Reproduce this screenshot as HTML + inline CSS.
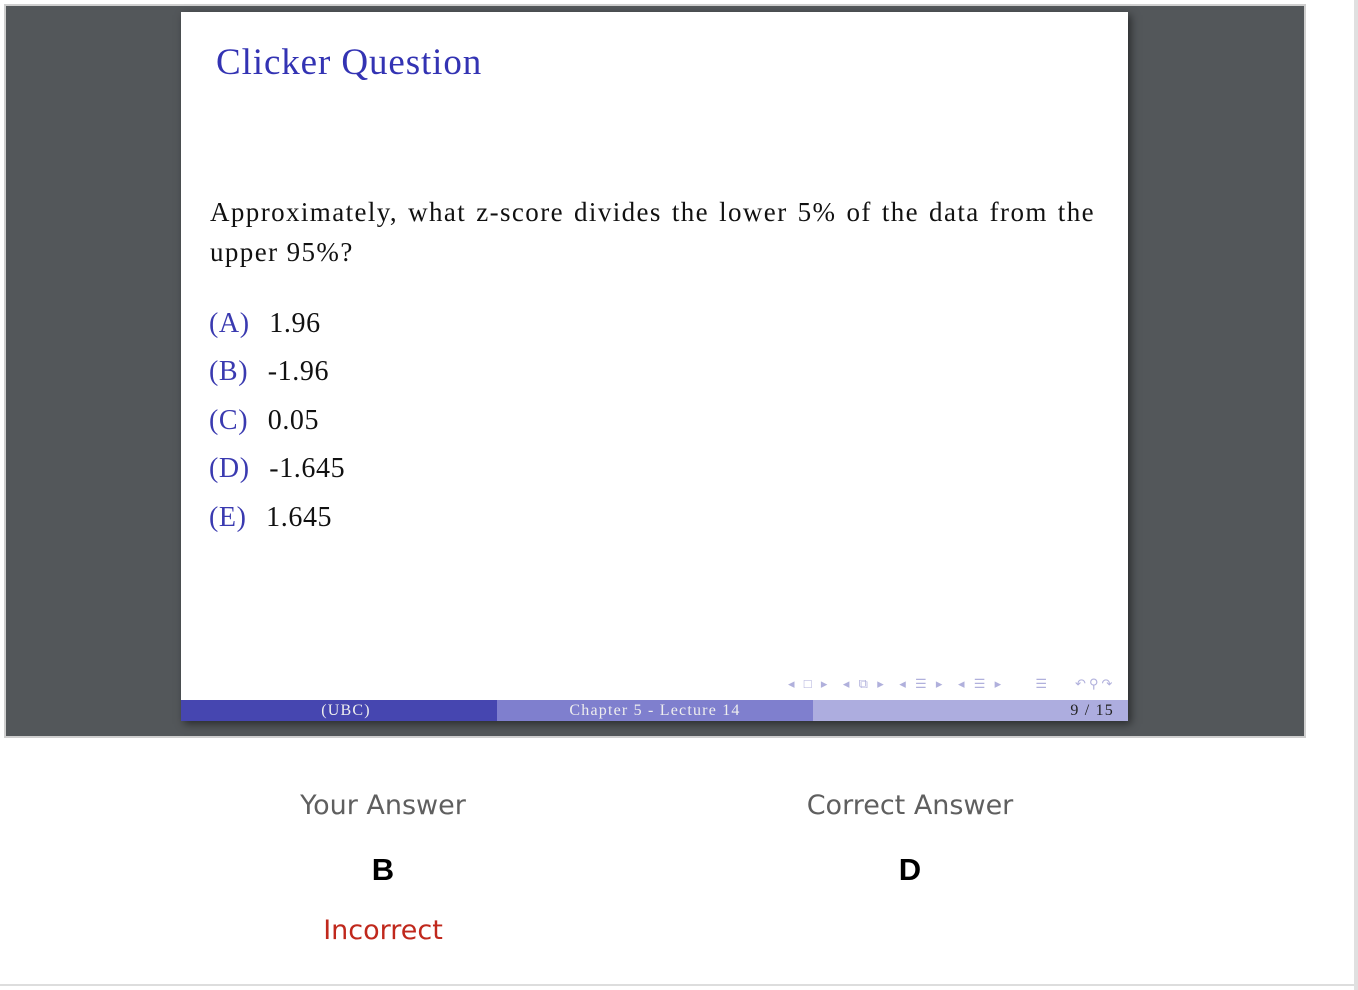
<!DOCTYPE html>
<html><head><meta charset="utf-8"><style>
*{margin:0;padding:0;box-sizing:border-box}
body{width:1358px;height:990px;background:#fff;position:relative;overflow:hidden;font-family:"Liberation Sans",sans-serif}
.frame{position:absolute;left:4px;top:4px;width:1302px;height:734px;background:#53575a;border:2px solid #cfcfcf}
.slide{position:absolute;left:181px;top:12px;width:947px;height:709px;background:#fff;box-shadow:3px 3px 8px rgba(0,0,0,.5);font-family:"Liberation Serif",serif}
.title{position:absolute;left:35px;top:29px;font-size:37px;color:#3333b3;letter-spacing:.9px}
.q{position:absolute;left:29px;font-size:27px;color:#111;letter-spacing:1.4px;white-space:nowrap}
.l1{top:185px;width:885px;text-align:justify;text-align-last:justify}
.l2{top:225px}
.opt{position:absolute;left:28px;font-size:28px;color:#111;letter-spacing:.6px}
.opt b{font-weight:normal;color:#3a3ab0;margin-right:12px}
.bar{position:absolute;top:688px;height:21px;font-size:16px;color:#eee;text-align:center;line-height:21px;letter-spacing:1.2px}
.nav{position:absolute;top:664px;left:607px;font-size:13px;color:#b0b0dc;letter-spacing:3px;white-space:nowrap}
.lbl{position:absolute;top:790px;color:#5f5f5f;width:400px;text-align:center;font-family:"DejaVu Sans","Liberation Sans",sans-serif;font-size:27px}
.ans{position:absolute;top:852px;font-size:31px;color:#000;width:400px;text-align:center;font-weight:bold}
.inc{position:absolute;top:915px;color:#c0281c;width:400px;text-align:center;font-family:"DejaVu Sans",sans-serif;font-size:27px}
</style></head><body>
<div class="frame"></div>
<div class="slide">
<div class="title">Clicker Question</div>
<div class="q l1">Approximately, what z-score divides the lower 5% of the data from the</div>
<div class="q l2">upper 95%?</div>
<div class="opt" style="top:296px"><b>(A)</b> 1.96</div>
<div class="opt" style="top:344px"><b>(B)</b> -1.96</div>
<div class="opt" style="top:393px"><b>(C)</b> 0.05</div>
<div class="opt" style="top:441px"><b>(D)</b> -1.645</div>
<div class="opt" style="top:490px"><b>(E)</b> 1.645</div>
<div class="nav">◂ □ ▸ &nbsp;◂ ⧉ ▸ &nbsp;◂ ☰ ▸ &nbsp;◂ ☰ ▸ &nbsp;&nbsp;&nbsp; ☰ &nbsp;&nbsp; ↶⚲↷</div>
<div class="bar" style="left:0;width:316px;background:#4646b0;padding-left:14px">(UBC)</div>
<div class="bar" style="left:316px;width:316px;background:#7f7fce">Chapter 5 - Lecture 14</div>
<div class="bar" style="left:632px;width:315px;background:#adaddf;color:#222;text-align:right;padding-right:14px">9 / 15</div>
</div>
<div class="lbl" style="left:183px">Your Answer</div>
<div class="lbl" style="left:710px">Correct Answer</div>
<div class="ans" style="left:183px">B</div>
<div class="ans" style="left:710px">D</div>
<div class="inc" style="left:183px">Incorrect</div>
<div style="position:absolute;left:0;top:984px;width:1358px;height:2px;background:#ddd"></div>
<div style="position:absolute;left:1354px;top:0;width:4px;height:990px;background:#e0e0e0"></div>
</body></html>
